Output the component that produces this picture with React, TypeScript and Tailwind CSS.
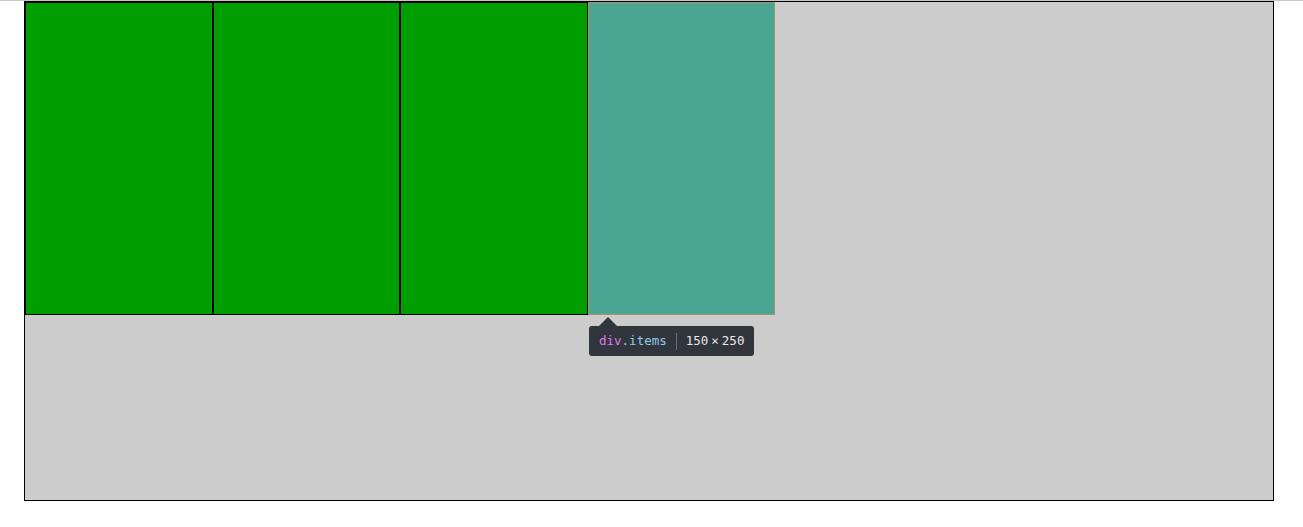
import React from "react";

export default function App() {
  return (
    <div className="w-[1303px] h-[527px] bg-white">
      <div className="h-px w-full bg-[#c8c8c8]" />
      <div className="relative ml-[24px] w-[1250px] h-[500px] border border-black bg-[#cccccc]">
        <div className="flex">
          <div className="w-[187.5px] h-[312.5px] border-[1.25px] border-black bg-[#009e00]" />
          <div className="w-[187.5px] h-[312.5px] border-[1.25px] border-black bg-[#009e00]" />
          <div className="w-[187.5px] h-[312.5px] border-[1.25px] border-black bg-[#009e00]" />
          <div className="w-[187.5px] h-[312.5px] border-[1.25px] border-[#a89765] bg-[#4aa593]" />
        </div>
        <div className="absolute left-[564px] top-[324px]">
          <div className="absolute left-[10px] top-[-9px] w-0 h-0 border-l-[9px] border-r-[9px] border-b-[9px] border-l-transparent border-r-transparent border-b-[#31353c]" />
          <div
            className="flex items-center h-[30px] px-[10px] rounded-[3px] bg-[#31353c] text-[12.5px] whitespace-nowrap"
            style={{ fontFamily: '"DejaVu Sans Mono", "Liberation Mono", monospace' }}
          >
            <span className="text-[#e477ea]">div</span>
            <span className="text-[#91c7ec]">.items</span>
            <span className="mx-[9px] w-px h-[17px] bg-[#6b6f76]" />
            <span className="text-[#e8e8e8]">
              150<span className="mx-[3px]">×</span>250
            </span>
          </div>
        </div>
      </div>
    </div>
  );
}
